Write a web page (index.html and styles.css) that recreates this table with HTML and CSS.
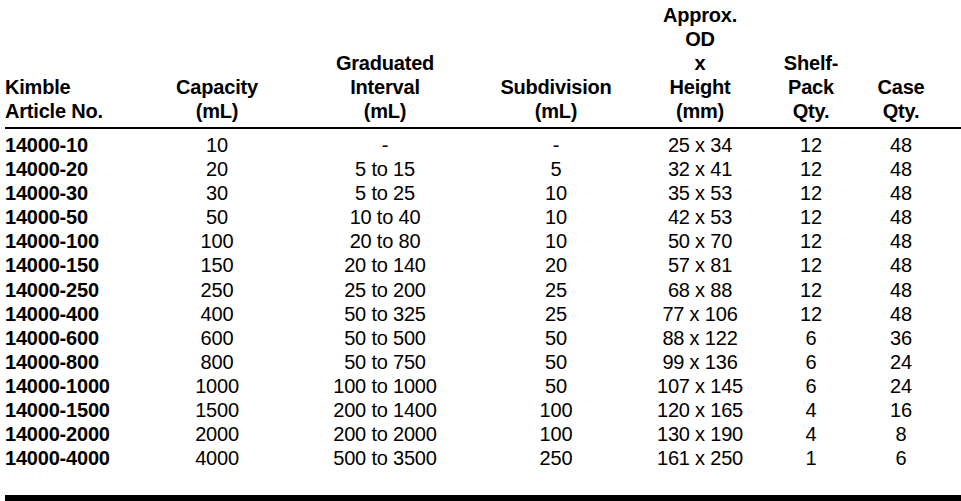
FILE: index.html
```html
<!DOCTYPE html>
<html>
<head>
<meta charset="utf-8">
<link rel="stylesheet" href="styles.css">
</head>
<body>
<div class="sheet">
<table class="spec">
<colgroup>
<col class="c-art"><col class="c-cap"><col class="c-grad"><col class="c-sub"><col class="c-od"><col class="c-shelf"><col class="c-case"><col class="c-fill">
</colgroup>
<thead>
<tr>
<th class="left">Kimble<br>Article No.</th>
<th>Capacity<br>(mL)</th>
<th>Graduated<br>Interval<br>(mL)</th>
<th>Subdivision<br>(mL)</th>
<th>Approx.<br>OD<br>x<br>Height<br>(mm)</th>
<th>Shelf-<br>Pack<br>Qty.</th>
<th>Case<br>Qty.</th>
<th></th>
</tr>
</thead>
<tbody>
<tr><td class="art">14000-10</td><td>10</td><td>-</td><td>-</td><td>25 x 34</td><td>12</td><td>48</td><td></td></tr>
<tr><td class="art">14000-20</td><td>20</td><td>5 to 15</td><td>5</td><td>32 x 41</td><td>12</td><td>48</td><td></td></tr>
<tr><td class="art">14000-30</td><td>30</td><td>5 to 25</td><td>10</td><td>35 x 53</td><td>12</td><td>48</td><td></td></tr>
<tr><td class="art">14000-50</td><td>50</td><td>10 to 40</td><td>10</td><td>42 x 53</td><td>12</td><td>48</td><td></td></tr>
<tr><td class="art">14000-100</td><td>100</td><td>20 to 80</td><td>10</td><td>50 x 70</td><td>12</td><td>48</td><td></td></tr>
<tr><td class="art">14000-150</td><td>150</td><td>20 to 140</td><td>20</td><td>57 x 81</td><td>12</td><td>48</td><td></td></tr>
<tr><td class="art">14000-250</td><td>250</td><td>25 to 200</td><td>25</td><td>68 x 88</td><td>12</td><td>48</td><td></td></tr>
<tr><td class="art">14000-400</td><td>400</td><td>50 to 325</td><td>25</td><td>77 x 106</td><td>12</td><td>48</td><td></td></tr>
<tr><td class="art">14000-600</td><td>600</td><td>50 to 500</td><td>50</td><td>88 x 122</td><td>6</td><td>36</td><td></td></tr>
<tr><td class="art">14000-800</td><td>800</td><td>50 to 750</td><td>50</td><td>99 x 136</td><td>6</td><td>24</td><td></td></tr>
<tr><td class="art">14000-1000</td><td>1000</td><td>100 to 1000</td><td>50</td><td>107 x 145</td><td>6</td><td>24</td><td></td></tr>
<tr><td class="art">14000-1500</td><td>1500</td><td>200 to 1400</td><td>100</td><td>120 x 165</td><td>4</td><td>16</td><td></td></tr>
<tr><td class="art">14000-2000</td><td>2000</td><td>200 to 2000</td><td>100</td><td>130 x 190</td><td>4</td><td>8</td><td></td></tr>
<tr><td class="art">14000-4000</td><td>4000</td><td>500 to 3500</td><td>250</td><td>161 x 250</td><td>1</td><td>6</td><td></td></tr>
</tbody>
</table>
<div class="endrule"></div>
</div>
</body>
</html>
```
FILE: styles.css
```css
html, body {
  margin: 0;
  padding: 0;
  background: #fff;
}
body {
  font-family: "Liberation Sans", Arial, sans-serif;
  font-size: 20px;
  line-height: 24px;
  letter-spacing: -0.2px;
  color: #000;
  overflow: hidden;
}
.sheet {
  padding: 3px 0 0 5px;
}
.spec {
  border-collapse: collapse;
  table-layout: fixed;
  width: 956px;
}
.c-art { width: 135px; }
.c-cap { width: 154px; }
.c-grad { width: 182px; }
.c-sub { width: 160px; }
.c-od { width: 128px; }
.c-shelf { width: 94px; }
.c-case { width: 86px; }
.c-fill { width: 17px; }
.spec th {
  font-weight: bold;
  text-align: center;
  vertical-align: bottom;
  padding: 0 0 4px 0;
  border-bottom: 2px solid #000;
  white-space: nowrap;
}
.spec th.left {
  text-align: left;
}
.spec td {
  padding: 0;
  line-height: 24.1px;
  text-align: center;
  white-space: nowrap;
}
.spec tbody tr:first-child td {
  padding-top: 4px;
}
.spec td.art {
  text-align: left;
  font-weight: bold;
}
.endrule {
  margin-top: 25px;
  border-top: 6px solid #000;
}
```
